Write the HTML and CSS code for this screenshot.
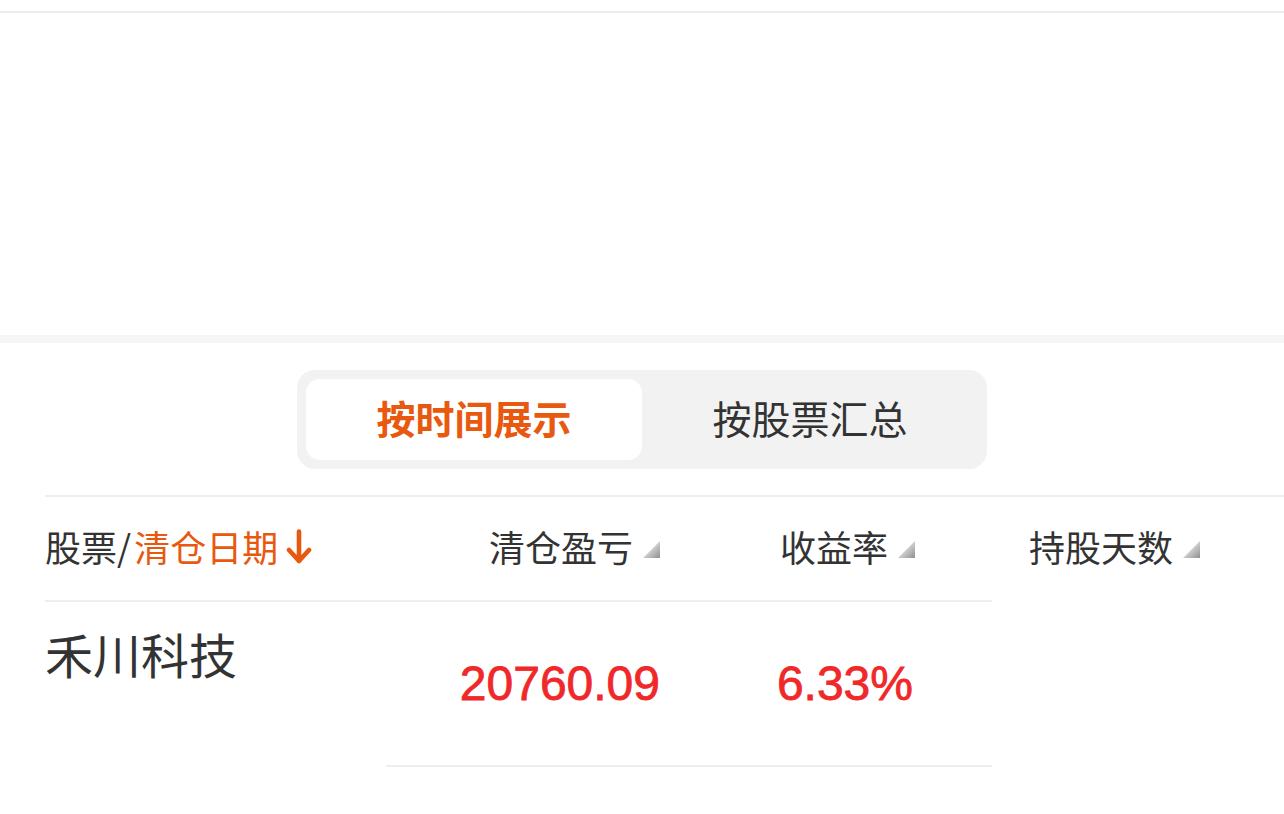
FILE: index.html
```html
<!DOCTYPE html>
<html lang="zh-CN">
<head>
    <meta charset="UTF-8">
    <title>清仓记录</title>
    <link rel="stylesheet" href="styles.css">
</head>
<body>
    <div class="top-line"></div>
    <div class="chart-area"></div>
    <div class="band"></div>

    <div class="switch">
        <div class="switch-item active">按时间展示</div>
        <div class="switch-item">按股票汇总</div>
    </div>

    <div class="table">
        <div class="thead">
            <div class="th th-name">
                股票/<span class="hl">清仓日期</span>
                <svg class="arrow" width="26" height="36" viewBox="0 0 26 36">
                    <path d="M13 2.5 V32 M3 21 L13 32 L23 21" fill="none" stroke="#e8590f" stroke-width="4.6" stroke-linecap="round" stroke-linejoin="round"/>
                </svg>
            </div>
            <div class="th">清仓盈亏<i class="sort"></i></div>
            <div class="th">收益率<i class="sort"></i></div>
            <div class="th">持股天数<i class="sort"></i></div>
        </div>

        <div class="trow">
            <div class="td-name">禾川科技</div>
            <div class="td-values">
                <div class="num">20760.09</div>
                <div class="num pct">6.33%</div>
            </div>
        </div>
    </div>
</body>
</html>
```

FILE: styles.css
```css
/* Общие */
body {
    margin: 0;
    background: #fff;
    font-family: "Noto Sans CJK SC", "Liberation Sans", sans-serif;
    color: #333;
    overflow: hidden;
}

.top-line {
    margin-top: 11px;
    height: 2px;
    background: #ebebeb;
}

.chart-area {
    height: 322px;
}

.band {
    height: 8px;
    background: #f6f6f6;
}

/* Переключатель */
.switch {
    width: 672px;
    margin: 27px auto 0;
    padding: 9px;
    display: flex;
    background: #f2f2f2;
    border-radius: 18px;
}

.switch-item {
    flex: 1;
    height: 81px;
    padding-bottom: 6px;
    box-sizing: border-box;
    display: flex;
    align-items: center;
    justify-content: center;
    font-size: 39px;
    color: #333;
    border-radius: 14px;
}

.switch-item.active {
    background: #fff;
    color: #e8590f;
    font-weight: bold;
}

/* Таблица */
.table {
    margin: 26px 0 0 45px;
    border-top: 2px solid #eeeeee;
}

.thead {
    width: 947px;
    height: 103px;
    border-bottom: 2px solid #eeeeee;
    display: grid;
    grid-template-columns: 341px 274px 255px 285px;
    align-items: center;
}

.th {
    display: flex;
    align-items: center;
    justify-content: flex-end;
    margin-bottom: 6px;
    font-size: 36px;
    white-space: nowrap;
}

.th-name {
    justify-content: flex-start;
}

.hl {
    margin-left: 3px;
    color: #e8590f;
}

.arrow {
    margin-left: 8px;
    margin-top: 2px;
}

.sort {
    width: 17px;
    height: 17px;
    margin-left: 10px;
    margin-top: 8px;
    background: linear-gradient(135deg, #e0e0e0 35%, #8f8f8f);
    clip-path: polygon(100% 0, 100% 100%, 0 100%);
}

.trow {
    display: flex;
}

.td-name {
    width: 341px;
    padding-top: 23px;
    font-size: 48px;
    line-height: 1.2;
}

.td-values {
    width: 606px;
    height: 163px;
    border-bottom: 2px solid #eeeeee;
    display: grid;
    grid-template-columns: 274px 255px;
    align-items: center;
}

.num {
    text-align: right;
    font-family: "Liberation Sans", Arial, sans-serif;
    font-size: 48px;
    color: #f0282a;
    -webkit-text-stroke: 0.8px #f0282a;
}

.pct {
    padding-right: 2px;
}
```
